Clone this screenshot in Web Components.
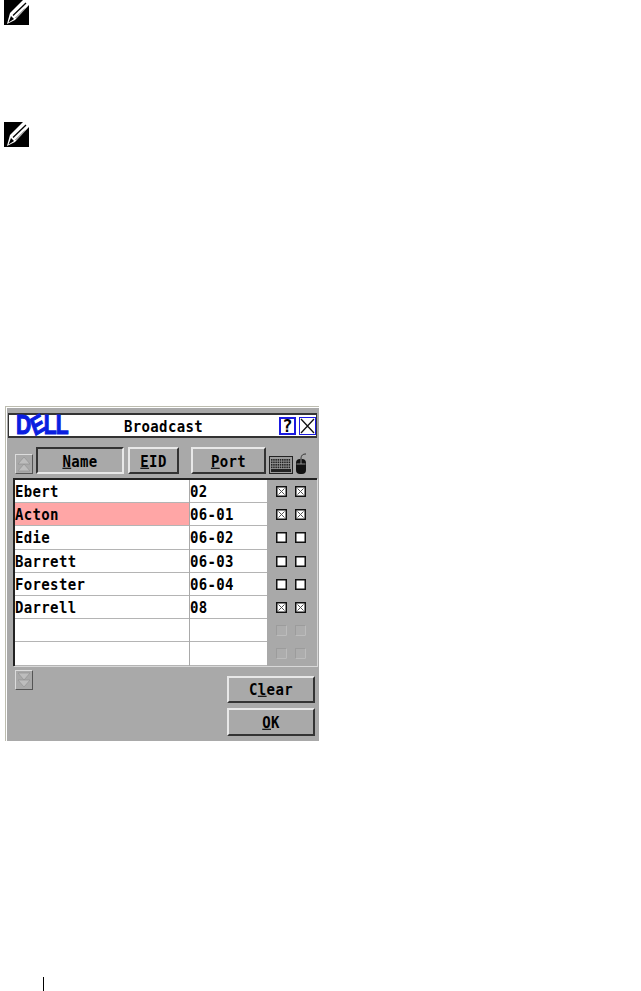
<!DOCTYPE html>
<html>
<head>
<meta charset="utf-8">
<style>
  html, body { margin: 0; background: #fff; }
  body { height: 991px; overflow: hidden; display: flex; flex-direction: column; font-family: "DejaVu Sans Mono", monospace; }
</style>
</head>
<body>
<note-icon style="margin:0 0 0 4px"></note-icon>
<note-icon style="margin:97px 0 0 4px"></note-icon>
<kvm-window style="margin:259px 0 0 5px"></kvm-window>
<page-foot></page-foot>
<script>
// Icono de nota: el lápiz blanco sobre cuadro negro
class NoteIcon extends HTMLElement {
  constructor() {
    super();
    this.attachShadow({mode: 'open'}).innerHTML = `
      <style>
        :host { display: block; width: 25px; height: 25px; }
        svg { display: block; }
      </style>
      <svg width="25" height="25" viewBox="0 0 25 25">
        <rect width="25" height="25" fill="#000"/>
        <path d="M19 0 H25 V5 L11 20 L3 24 L6 13 Z" fill="#fff"/>
        <path d="M9 15.5 L22 3" stroke="#000" stroke-width="1.3"/>
        <path d="M11.5 18 L21 8.5" stroke="#666" stroke-width="1"/>
        <path d="M4.5 22.5 L7 16 L10 19 Z" fill="#000"/>
      </svg>`;
  }
}
customElements.define('note-icon', NoteIcon);

// Botón con relieve. Con "pressed" el relieve va al revés
class KvmButton extends HTMLElement {
  constructor() {
    super();
    this.attachShadow({mode: 'open'}).innerHTML = `
      <style>
        :host {
          display: flex; align-items: center; justify-content: center; box-sizing: border-box;
          height: 27px; background: #a9a9a9; color: #000;
          border: 2px solid; border-color: #e8e8e8 #333 #333 #e8e8e8;
          font: bold 14px "DejaVu Sans Mono", monospace; letter-spacing: .35px;
        }
        :host([pressed]) { border-color: #333 #e8e8e8 #e8e8e8 #333; }
        ::slotted(span) { display: inline-block; transform: scaleY(1.12); }
      </style>
      <slot></slot>`;
  }
}
customElements.define('kvm-button', KvmButton);

// Flecha doble para ordenar / bajar
class ArrowButton extends HTMLElement {
  constructor() {
    super();
    const abajo = this.hasAttribute('down');
    this.attachShadow({mode: 'open'}).innerHTML = `
      <style>
        :host {
          display: block; box-sizing: border-box; width: 18px; height: 20px; background: #a9a9a9;
          border: 1px solid; border-color: #dcdcdc #555 #555 #dcdcdc;
        }
        svg { display: block; }
      </style>
      <svg width="16" height="18" viewBox="0 0 16 18">
        <path d="${abajo ? 'M2 2 H14 L8 9 Z M2 9 H14 L8 16 Z' : 'M8 2 L14 9 H2 Z M8 9 L14 16 H2 Z'}" fill="#bdbdbd" stroke="#8e8e8e" stroke-width=".6"/>
      </svg>`;
  }
}
customElements.define('arrow-button', ArrowButton);

// Casilla: vacía, marcada con una X o desactivada
class KvmCheck extends HTMLElement {
  constructor() {
    super();
    const estado = this.getAttribute('state') || 'off';
    let dibujo = '<rect x=".75" y=".75" width="9.5" height="9.5" fill="#fff" stroke="#111" stroke-width="1.5"/>';
    if (estado === 'on') {
      dibujo += '<path d="M2.5 2.5 L8.5 8.5 M8.5 2.5 L2.5 8.5" stroke="#555" stroke-width="1"/>';
    }
    if (estado === 'dis') {
      dibujo = '<rect x=".5" y=".5" width="10" height="10" fill="#adadad" stroke="#9c9c9c"/><path d="M10.5 .5 V10.5 H.5" fill="none" stroke="#bcbcbc"/>';
    }
    this.attachShadow({mode: 'open'}).innerHTML = `
      <style>
        :host { display: block; width: 11px; height: 11px; }
        svg { display: block; }
      </style>
      <svg width="11" height="11" viewBox="0 0 11 11">${dibujo}</svg>`;
  }
}
customElements.define('kvm-check', KvmCheck);

// Fila de la tabla: nombre, puerto y dos casillas
class KvmRow extends HTMLElement {
  constructor() {
    super();
    const nombre = this.getAttribute('name') || '';
    const puerto = this.getAttribute('port') || '';
    const estado = this.getAttribute('state') || 'dis';
    this.attachShadow({mode: 'open'}).innerHTML = `
      <style>
        :host {
          display: grid; grid-template-columns: 174px 1px 77px 50px; height: 23.2px;
          font: bold 14px "DejaVu Sans Mono", monospace; letter-spacing: .35px; color: #000;
        }
        .c { background: #fff; border-bottom: 1.2px solid #b4b4b4; line-height: 22px; box-sizing: border-box; white-space: pre; }
        .c span { display: inline-block; transform: scaleY(1.12); }
        :host([selected]) .nombre { background: #ffa6a6; }
        .sep { background: #a9a9a9; }
        .checks { display: flex; gap: 8px; padding: 6px 0 0 9px; background: #a9a9a9; }
      </style>
      <div class="c nombre"><span>${nombre}</span></div>
      <div class="sep"></div>
      <div class="c"><span>${puerto}</span></div>
      <div class="checks"><kvm-check state="${estado}"></kvm-check><kvm-check state="${estado}"></kvm-check></div>`;
  }
}
customElements.define('kvm-row', KvmRow);

// Iconos de teclado y ratón de la cabecera
class DeviceIcons extends HTMLElement {
  constructor() {
    super();
    let teclas = '';
    for (let f = 0; f < 4; f++) {
      for (let c = 0; c < 9; c++) {
        teclas += `<rect x="${2 + c * 2.2}" y="${3 + f * 2.5}" width="1.5" height="1.7" fill="#222"/>`;
      }
    }
    this.attachShadow({mode: 'open'}).innerHTML = `
      <style>
        :host { display: flex; gap: 2px; align-items: flex-end; }
        svg { display: block; }
      </style>
      <svg width="24" height="18" viewBox="0 0 24 18">
        <rect x=".5" y=".5" width="23" height="17" fill="#9a9a9a" stroke="#222"/>${teclas}
        <rect x="2" y="13" width="20" height="3" fill="#222"/>
      </svg>
      <svg width="12" height="21" viewBox="0 0 12 21">
        <path d="M6 6 C6 2 8 1 11 1" fill="none" stroke="#333"/>
        <rect x="1" y="6" width="10" height="15" rx="4" fill="#111"/>
        <path d="M1.5 11 H10.5 M6 6 V11" stroke="#aaa" stroke-width=".8"/>
      </svg>`;
  }
}
customElements.define('device-icons', DeviceIcons);

// Ventana Broadcast completa
class KvmWindow extends HTMLElement {
  constructor() {
    super();
    const filas = [
      ['Ebert', '02', 'on'], ['Acton', '06-01', 'on', true], ['Edie', '06-02', 'off'],
      ['Barrett', '06-03', 'off'], ['Forester', '06-04', 'off'], ['Darrell', '08', 'on'],
      ['', '', 'dis'], ['', '', 'dis']
    ];
    const htmlFilas = filas.map(f =>
      `<kvm-row name="${f[0]}" port="${f[1]}" state="${f[2]}"${f[3] ? ' selected' : ''}></kvm-row>`).join('');
    this.attachShadow({mode: 'open'}).innerHTML = `
      <style>
        :host {
          display: block; box-sizing: border-box; width: 314px; height: 335px; background: #a9a9a9;
          border-top: 1px solid #bdbdb0; border-left: 1px solid #bdbdb0;
          box-shadow: inset 1px 1px 0 #fff;
          padding: 6px 2px 0 2px;
        }
        .titulo {
          display: flex; align-items: center; box-sizing: border-box; height: 25px; background: #fff;
          border: 1px solid #333; border-width: 2px 1px 2px 1px;
          font: bold 14px "DejaVu Sans Mono", monospace; letter-spacing: .35px; color: #000;
        }
        .dell {
          margin-left: 7px; width: 54px; flex: none; color: #0a1ee0; font: bold 27px/21px "Liberation Sans", sans-serif;
          letter-spacing: -1px; white-space: nowrap; -webkit-text-stroke: 1.1px #0a1ee0;
          transform: scaleX(.78); transform-origin: left center;
        }
        .dell span { display: inline-block; transform: rotate(-25deg) scale(.95); }
        .nombre { padding-left: 54px; }
        .nombre span { display: inline-block; transform: scaleY(1.12); }
        .ayuda, .cerrar {
          box-sizing: border-box; width: 17px; height: 18px; display: flex;
          align-items: center; justify-content: center; font: bold 17px "DejaVu Sans Mono", monospace;
          border: 2px solid #1a1ae0; margin-left: auto;
        }
        .cerrar { margin-left: 3px; border: 1px solid #1a1ae0; }
        .cabecera { display: flex; align-items: flex-end; margin: 10px 0 0 7px; height: 26px; }
        .cabecera arrow-button { margin-right: 3px; }
        .tabla {
          margin: 4px 0 0 5px; width: 304px; box-sizing: border-box; border-top: 2px solid #222;
          border-left: 2px solid #222; box-shadow: 1px 1px 0 #d8d8d8;
        }
        .pie { display: flex; justify-content: space-between; margin: 4px 2px 0 7px; }
        .botones { display: flex; flex-direction: column; gap: 5px; padding-top: 6px; }
      </style>
      <div class="titulo">
        <div class="dell">D<span>E</span>LL</div>
        <div class="nombre"><span>Broadcast</span></div>
        <div class="ayuda">?</div>
        <div class="cerrar"><svg width="15" height="16" viewBox="0 0 15 16"><path d="M1 1 L14 15 M14 1 L1 15" stroke="#111" stroke-width="1.3"/></svg></div>
      </div>
      <div class="cabecera">
        <arrow-button></arrow-button>
        <kvm-button pressed style="width:88px"><span><u>N</u>ame</span></kvm-button>
        <kvm-button style="width:51px;margin-left:4px"><span><u>E</u>ID</span></kvm-button>
        <kvm-button style="width:75px;margin-left:12px"><span><u>P</u>ort</span></kvm-button>
        <device-icons style="margin-left:3px"></device-icons>
      </div>
      <div class="tabla">${htmlFilas}</div>
      <div class="pie">
        <arrow-button down></arrow-button>
        <div class="botones">
          <kvm-button style="width:88px"><span>C<u>l</u>ear</span></kvm-button>
          <kvm-button style="width:88px;height:28px"><span><u>O</u>K</span></kvm-button>
        </div>
      </div>`;
  }
}
customElements.define('kvm-window', KvmWindow);

// Barrita vertical del pie de página
class PageFoot extends HTMLElement {
  constructor() {
    super();
    this.attachShadow({mode: 'open'}).innerHTML = `
      <style>
        :host { display: block; margin-top: auto; height: 14px; padding-left: 43px; }
        div { width: 1px; height: 14px; background: #000; }
      </style>
      <div></div>`;
  }
}
customElements.define('page-foot', PageFoot);
</script>
</body>
</html>
